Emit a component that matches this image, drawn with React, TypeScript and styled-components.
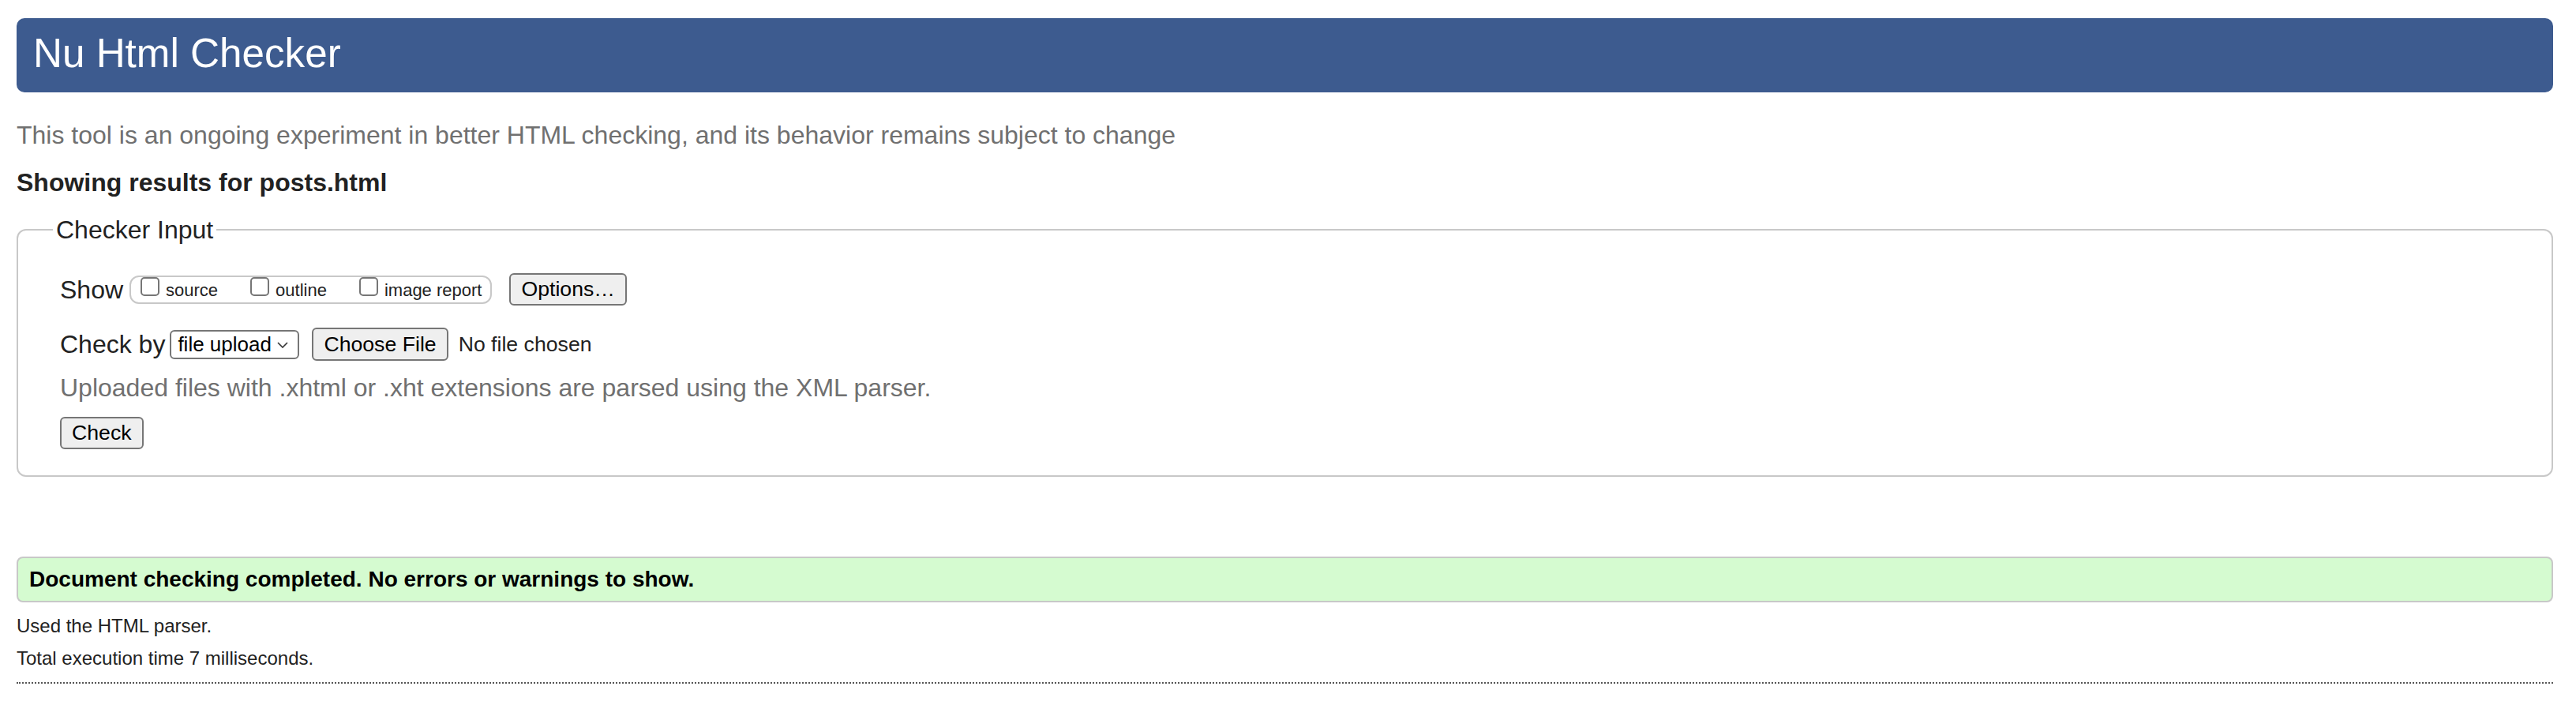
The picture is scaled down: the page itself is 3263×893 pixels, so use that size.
import React from "react";
import styled, { createGlobalStyle } from "styled-components";

const GlobalStyle = createGlobalStyle`
  html, body {
    margin: 0;
    padding: 0;
    background: #fff;
  }
  body {
    font-family: "Liberation Sans", Arial, Helvetica, sans-serif;
    color: #222;
  }
`;

const SPage = styled.div`
  padding: 23px 29px 0 21px;
`;

const SHeader = styled.header`
  display: flex;
  align-items: center;
  height: 94px;
  box-sizing: border-box;
  padding: 0 0 4px 21px;
  background: #3d5b8f;
  border-radius: 10px;
`;

const STitle = styled.h1`
  margin: 0;
  font-size: 51.2px;
  font-weight: normal;
  line-height: 1;
  color: #fff;
`;

const SLead = styled.p`
  margin: 34px 0 0;
  font-size: 32px;
  line-height: 40px;
  color: #707070;
`;

const SResultsFor = styled.h2`
  margin: 20px 0 0;
  font-size: 32px;
  line-height: 40px;
  font-weight: bold;
  color: #222;
`;

const SFieldset = styled.fieldset`
  margin: 20px 0 0;
  padding: 35px 0 33px 53px;
  border: 2px solid #c8c8c8;
  border-radius: 12px;
  min-inline-size: 0;
`;

const SLegend = styled.legend`
  margin-left: -9px;
  padding: 0 4px;
  font-size: 32px;
  line-height: 40px;
  color: #222;
`;

const SRow = styled.div<{ $top?: number }>`
  display: flex;
  align-items: center;
  margin-top: ${(p) => p.$top ?? 0}px;
`;

const SFieldLabel = styled.span<{ $gap: number }>`
  font-size: 32px;
  line-height: 40px;
  color: #222;
  margin-right: ${(p) => p.$gap}px;
`;

const SShowGroup = styled.div`
  display: flex;
  align-items: flex-start;
  gap: 41px;
  height: 36px;
  box-sizing: border-box;
  padding: 0 11px 0 12px;
  border: 2px solid #c8c8c8;
  border-radius: 12px;
`;

const SCheckItem = styled.label`
  display: flex;
  align-items: flex-start;
`;

const SBox = styled.input.attrs({ type: "checkbox" })`
  appearance: none;
  margin: 0 8px 0 0;
  width: 24px;
  height: 24px;
  box-sizing: border-box;
  border: 2px solid #767676;
  border-radius: 5px;
  background: #fff;
`;

const SCheckText = styled.span`
  margin-top: 4px;
  font-size: 22px;
  line-height: 26px;
  color: #222;
`;

const SButton = styled.button<{ $h: number; $ml?: number }>`
  height: ${(p) => p.$h}px;
  margin-left: ${(p) => p.$ml ?? 0}px;
  padding: 0 13px;
  box-sizing: border-box;
  font-family: inherit;
  font-size: 26.67px;
  line-height: 1;
  color: #000;
  background: #efefef;
  border: 2px solid #767676;
  border-radius: 6px;
`;

const SSelectWrap = styled.div`
  position: relative;
  width: 164px;
  height: 37px;
`;

const SSelect = styled.select`
  appearance: none;
  width: 100%;
  height: 100%;
  box-sizing: border-box;
  padding: 0 0 0 8px;
  font-family: inherit;
  font-size: 26px;
  color: #000;
  background: #fff;
  border: 2px solid #767676;
  border-radius: 6px;
`;

const SChevron = styled.svg`
  position: absolute;
  right: 14px;
  top: 15px;
  pointer-events: none;
`;

const SFileName = styled.span`
  margin-left: 13px;
  font-size: 26.67px;
  color: #222;
`;

const SNote = styled.p`
  margin: 14px 0 0;
  font-size: 32px;
  line-height: 40px;
  color: #707070;
`;

const SSuccess = styled.div`
  margin-top: 101px;
  padding: 10px 14px;
  border: 2px solid #c8c8c8;
  border-radius: 8px;
  background: #d5fbd0;
  font-size: 28px;
  line-height: 34px;
  font-weight: bold;
  color: #000;
`;

const SInfo = styled.p<{ $top: number }>`
  margin: ${(p) => p.$top}px 0 0;
  font-size: 24px;
  line-height: 30px;
  color: #222;
`;

const SRule = styled.hr`
  margin: 15px 0 0;
  height: 0;
  border: 0;
  border-top: 2px dotted #555;
`;

const showOptions = ["source", "outline", "image report"];

const App = () => {
  return (
    <SPage>
      <GlobalStyle />
      <SHeader>
        <STitle>Nu Html Checker</STitle>
      </SHeader>
      <SLead>
        This tool is an ongoing experiment in better HTML checking, and its
        behavior remains subject to change
      </SLead>
      <SResultsFor>Showing results for posts.html</SResultsFor>

      <SFieldset>
        <SLegend>Checker Input</SLegend>
        <SRow>
          <SFieldLabel $gap={8}>Show</SFieldLabel>
          <SShowGroup>
            {showOptions.map((name) => (
              <SCheckItem key={name}>
                <SBox />
                <SCheckText>{name}</SCheckText>
              </SCheckItem>
            ))}
          </SShowGroup>
          <SButton $h={41} $ml={22}>Options…</SButton>
        </SRow>
        <SRow $top={28}>
          <SFieldLabel $gap={6}>Check by</SFieldLabel>
          <SSelectWrap>
            <SSelect defaultValue="file">
              <option value="file">file upload</option>
              <option value="address">address</option>
              <option value="text">text input</option>
            </SSelect>
            <SChevron width="14" height="8" viewBox="0 0 14 8">
              <polyline points="1,1 7,7 13,1" fill="none" stroke="#333" strokeWidth="1.6" />
            </SChevron>
          </SSelectWrap>
          <SButton $h={42} $ml={16}>Choose File</SButton>
          <SFileName>No file chosen</SFileName>
        </SRow>
        <SNote>
          Uploaded files with .xhtml or .xht extensions are parsed using the XML
          parser.
        </SNote>
        <SRow $top={17}>
          <SButton $h={41}>Check</SButton>
        </SRow>
      </SFieldset>

      <SSuccess>Document checking completed. No errors or warnings to show.</SSuccess>
      <SInfo $top={15}>Used the HTML parser.</SInfo>
      <SInfo $top={11}>Total execution time 7 milliseconds.</SInfo>
      <SRule />
    </SPage>
  );
};

export default App;
